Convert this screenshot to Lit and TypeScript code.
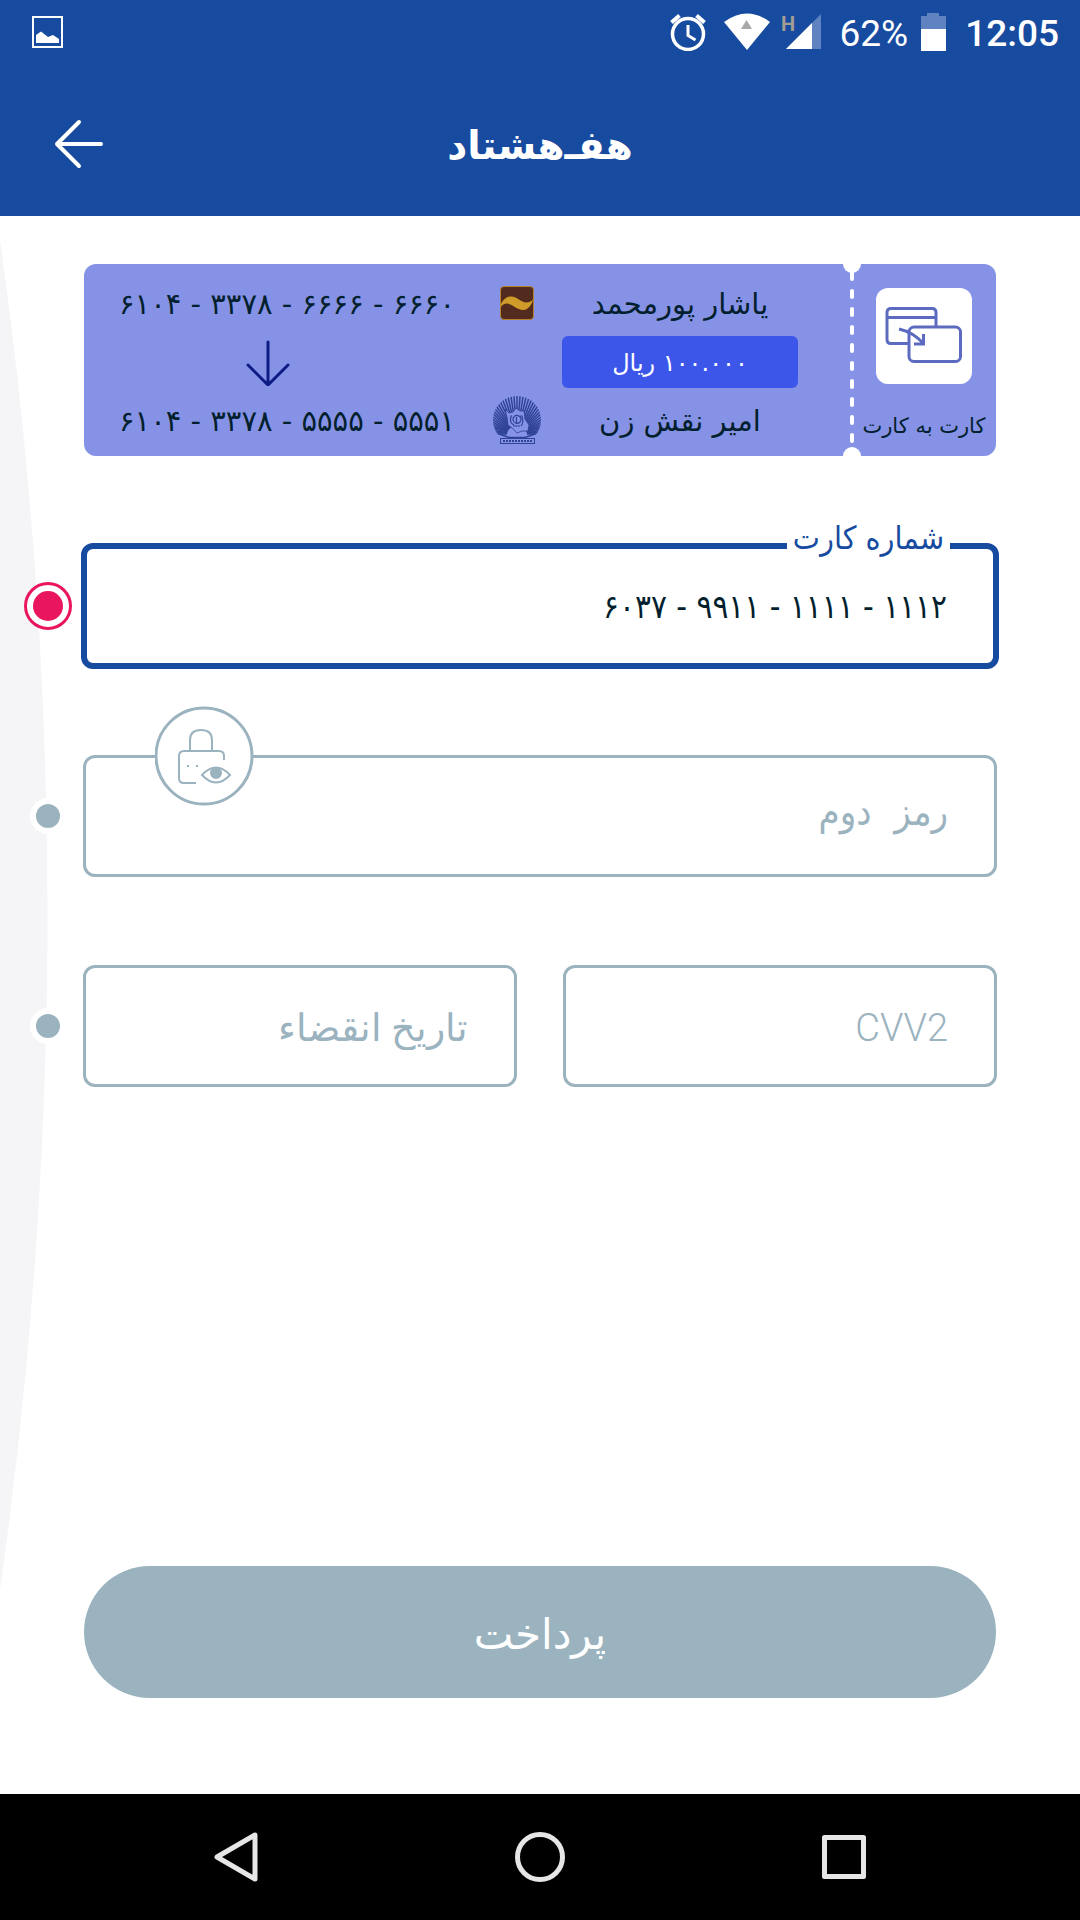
import { LitElement, html, svg, css } from "lit";
import { customElement, property } from "lit/decorators.js";

const rays = Array.from({ length: 41 }, (_, i) => {
  const angle = Math.PI + (i * Math.PI) / 40;
  return {
    x1: 24 + 10 * Math.cos(angle),
    y1: 38 + 8 * Math.sin(angle),
    x2: 24 + 50 * Math.cos(angle),
    y2: 38 + 50 * Math.sin(angle),
  };
});

@customElement("status-bar")
export class StatusBar extends LitElement {
  static styles = css`
    :host {
      display: flex;
      align-items: center;
      height: 64px;
      padding: 0 21px 0 32px;
      color: #fff;
      font-family: Roboto, sans-serif;
      font-size: 37px;
      line-height: 60px;
    }
    svg {
      display: block;
      flex: none;
    }
    .spacer {
      flex: 1;
    }
    .alarm {
      margin-right: 18px;
    }
    .wifi {
      margin-right: 11px;
    }
    .signal {
      margin-right: 18px;
    }
    .network {
      font-size: 20px;
      font-weight: 700;
      fill: #a39d94;
    }
    .percent {
      padding-top: 4px;
      margin-right: 13px;
    }
    .battery {
      margin-right: 19px;
    }
    .time {
      padding-top: 4px;
      font-weight: 500;
    }
  `;

  render() {
    return html`
      <svg width="32" height="32" viewBox="0 0 32 32" fill="none">
        <rect x="1" y="1" width="29" height="30" stroke="#fff" stroke-width="2" />
        <path d="M4 27V19L9 15.500L16 21L21 19L27 23V27Z" fill="#fff" />
      </svg>
      <span class="spacer"></span>
      <svg class="alarm" width="36" height="38" viewBox="0 0 36 38" fill="none" stroke="#fff">
        <circle cx="18" cy="21" r="15.500" stroke-width="3.500" />
        <path d="M18 12V22.500L25.500 27" stroke-width="3" />
        <path d="M1.500 9.500L9.500 2.500M34.500 9.500L26.500 2.500" stroke-width="4" />
      </svg>
      <svg class="wifi" width="46" height="38" viewBox="0 0 46 38">
        <path d="M0 9Q23 -8 46 9L23 37Z" fill="#fff" />
        <path d="M22.500 7L28 16H17Z" fill="#a8a8a8" />
      </svg>
      <svg class="signal" width="40" height="40" viewBox="0 0 40 40">
        <path d="M5 37L40 2V37Z" fill="#5f82c0" />
        <path d="M5 37L31 11V37Z" fill="#fff" />
        <text class="network" x="0" y="19">H</text>
      </svg>
      <span class="percent">62%</span>
      <svg class="battery" width="25" height="38" viewBox="0 0 25 38">
        <path d="M0 3H6V0H18V3H25V17H0Z" fill="#5f82c0" />
        <path d="M0 16H25V38H0Z" fill="#fff" />
      </svg>
      <span class="time">12:05</span>
    `;
  }
}

@customElement("transfer-ticket")
export class TransferTicket extends LitElement {
  static styles = css`
    :host {
      display: flex;
      height: 192px;
      position: relative;
      border-radius: 12px;
      background: #8692e6;
      color: #021f2e;
      overflow: hidden;
      font-family: "DejaVu Sans", sans-serif;
    }
    svg {
      display: block;
    }
    .details {
      flex: 1;
      display: grid;
      grid-template-columns: 1fr 54px 272px;
      grid-template-rows: 66px 52px 64px;
      align-items: center;
      justify-items: center;
      padding: 6px 27px 4px 0;
    }
    .number,
    .name {
      padding-top: 2px;
      font-size: 29px;
      line-height: 36px;
    }
    .number {
      direction: ltr;
    }
    .down {
      margin-right: 38px;
    }
    .amount {
      width: 236px;
      height: 52px;
      border-radius: 6px;
      background: #3c56ea;
      color: #fff;
      font-size: 24px;
      line-height: 54px;
      text-align: center;
    }
    .tear {
      width: 18px;
      height: 192px;
    }
    .kind {
      width: 126px;
      display: flex;
      flex-direction: column;
      align-items: center;
      padding: 24px 9px 0 0;
      gap: 24px;
    }
    .tile {
      border-radius: 12px;
      background: #fff;
    }
    .kind-name {
      font-size: 21px;
      line-height: 36px;
      white-space: nowrap;
    }
  `;

  render() {
    return html`
      <div class="details">
        <span class="number">۶۱۰۴ - ۳۳۷۸ - ۶۶۶۶ - ۶۶۶۰</span>
        <svg width="34" height="34" viewBox="0 0 34 34">
          <rect x="0.500" y="0.500" width="33" height="33" rx="3.500" fill="#522b1e" stroke="#b5832f" />
          <path d="M1 18C4 12 8 10 12 10.500C18 11.500 21 16 26 16.500C29.500 16.500 32 15 33 13C32 19 28 24 23 24C17 23.500 12 18 7 17.500C4 17.500 2 19 1 21Z" fill="#d09c29" />
        </svg>
        <span class="name" dir="rtl">یاشار پورمحمد</span>
        <svg class="down" width="44" height="48" viewBox="0 0 44 48" fill="none" stroke="#0d1c85" stroke-width="3" stroke-linecap="round" stroke-linejoin="round">
          <path d="M22 4V47M2 27L22 47L42 27" />
        </svg>
        <span></span>
        <div class="amount" dir="rtl">۱۰۰.۰۰۰ ریال</div>
        <span class="number">۶۱۰۴ - ۳۳۷۸ - ۵۵۵۵ - ۵۵۵۱</span>
        <svg width="48" height="48" viewBox="0 0 48 48" fill="none" stroke="#2f4396">
          <defs>
            <clipPath id="disc"><circle cx="24" cy="24" r="24" /></clipPath>
          </defs>
          <g clip-path="url(#disc)" stroke-width="1.500">
            ${rays.map((r) => svg`<line x1=${r.x1} y1=${r.y1} x2=${r.x2} y2=${r.y2} />`)}
            <path d="M6 38L16 41.500H32L42 38" />
          </g>
          <path d="M12 13L16 17L20 16L23 12L27 15L31 15L32 23L36 29L35 35L29 35L24 37L19 32L15 29L14 21Z" fill="#8692e6" stroke-width="0.800" />
          <path d="M19 20H18Q16 27 21 29M27 20H29Q31 27 28 30M20 24A4 4 0 1 1 27 26A4 4 0 0 1 20 24M23.500 21V28M20 30H27" stroke-width="1.200" />
          <rect x="7.500" y="42.500" width="34" height="5" fill="#8692e6" stroke-width="1" />
          <path d="M10 45H39" stroke-width="2" stroke-dasharray="2 1" />
        </svg>
        <span class="name" dir="rtl">امیر نقش زن</span>
      </div>
      <svg class="tear" viewBox="0 0 18 192">
        <path d="M9 9V186" fill="none" stroke="#fff" stroke-width="4" stroke-linecap="round" stroke-dasharray="6 12" />
        <circle cx="9" cy="0" r="9" fill="#fff" />
        <circle cx="9" cy="192" r="9" fill="#fff" />
      </svg>
      <div class="kind">
        <svg class="tile" width="96" height="96" viewBox="0 0 96 96" fill="none" stroke="#5c6bc0" stroke-width="3">
          <path d="M32 55.500H15Q11 55.500 11 51.500V24.500Q11 20.500 15 20.500H56Q60 20.500 60 24.500V38M11 29.500H60" />
          <rect x="33" y="39" width="51.500" height="34.500" rx="5" />
          <path d="M23 41Q37 44 48 56M47.500 46V56H38" />
        </svg>
        <span class="kind-name" dir="rtl">کارت به کارت</span>
      </div>
    `;
  }
}

@customElement("form-field")
export class FormField extends LitElement {
  @property() label = "";
  @property() value = "";
  @property() variant = "";

  static styles = css`
    :host {
      display: block;
      position: relative;
      flex: 1;
      min-width: 0;
      font-family: "DejaVu Sans Condensed", "DejaVu Sans", sans-serif;
    }
    .input {
      display: block;
      box-sizing: border-box;
      width: 100%;
      height: 122px;
      margin: 0;
      padding: 0 46px;
      border: 3px solid #9bb3bf;
      border-radius: 12px;
      background: #fff;
      outline: none;
      font-family: inherit;
      font-size: 38px;
      color: #021f2e;
      text-align: right;
    }
    .input::placeholder {
      color: #9bb3bf;
      opacity: 1;
    }
    .active {
      width: calc(100% + 4px);
      height: 126px;
      margin: -2px;
      border: 6px solid #174b9f;
      font-size: 33px;
    }
    .secret {
      padding-bottom: 4px;
      font-family: "Liberation Mono", "DejaVu Sans Condensed", "DejaVu Sans", monospace;
    }
    .light {
      padding-top: 4px;
      font-family: Roboto, "DejaVu Sans", sans-serif;
      font-weight: 300;
    }
    .label {
      position: absolute;
      top: -27px;
      right: 47px;
      padding: 0 6px;
      background: #fff;
      color: #174b9f;
      font-size: 32px;
      line-height: 40px;
    }
    .reveal {
      position: absolute;
      top: -49px;
      left: 72px;
      padding: 0;
      border: 0;
      background: none;
    }
    .reveal svg {
      display: block;
    }
  `;

  render() {
    const active = this.variant === "active";
    return html`
      ${active ? html`<label class="label" for="box" dir="rtl">${this.label}</label>` : ""}
      <input
        id="box"
        class="input ${this.variant}"
        type="text"
        dir=${active ? "ltr" : "rtl"}
        .value=${this.value}
        placeholder=${active ? "" : this.label}
        aria-label=${this.label}
      />
      ${this.variant === "secret"
        ? html`<button class="reveal" type="button" aria-label="رمز دوم">
            <svg width="100" height="100" viewBox="1 0 100 100" fill="none" stroke="#9bb3bf" stroke-width="2">
              <circle cx="50" cy="50" r="48" fill="#fff" stroke-width="3" />
              <path d="M36 45V34Q36 24 47 24Q58 24 58 34V45" />
              <path d="M42 77H30Q25 77 25 72V50Q25 45 30 45H65Q70 45 70 50V54" />
              <path d="M33 60H35M42 60H44" />
              <path d="M48 69Q62 54 76 69Q62 84 48 69Z" />
              <circle cx="62" cy="67" r="5" fill="#9bb3bf" />
            </svg>
          </button>`
        : ""}
    `;
  }
}

@customElement("app-root")
export class AppRoot extends LitElement {
  static styles = css`
    :host {
      display: flex;
      flex-direction: column;
      min-height: 100vh;
      background: #fff;
      font-family: "DejaVu Sans", sans-serif;
    }
    svg {
      display: block;
    }
    .top {
      background: #174b9f;
      height: 216px;
    }
    .bar {
      display: grid;
      grid-template-columns: 104px 1fr 104px;
      align-items: center;
      height: 160px;
    }
    .back {
      justify-self: end;
      padding: 0;
      border: 0;
      background: none;
    }
    .title {
      margin: 0;
      padding-top: 4px;
      color: #fff;
      font-size: 39px;
      font-weight: 700;
      line-height: 52px;
      text-align: center;
    }
    .content {
      position: relative;
      flex: 1;
      display: flex;
      flex-direction: column;
      padding: 48px 0 96px;
    }
    .curve {
      position: absolute;
      top: 0;
      left: 0;
    }
    .ticket {
      margin: 0 84px;
    }
    .steps {
      position: relative;
      display: flex;
      flex-direction: column;
      gap: 88px;
      margin-top: 89px;
    }
    .step {
      display: flex;
      align-items: center;
      padding-right: 83px;
    }
    .dot {
      flex: none;
      margin: 0 11px 0 24px;
    }
    .pair {
      flex: 1;
      display: flex;
      gap: 46px;
    }
    .pay {
      position: relative;
      margin: auto 84px 0;
      padding: 4px 0 0;
      height: 132px;
      border: 0;
      border-radius: 66px;
      background: #9bb3bf;
      color: #fff;
      font-family: inherit;
      font-size: 42px;
    }
    .nav {
      display: grid;
      grid-template-columns: 1fr 136px 1fr;
      height: 126px;
      background: #000;
    }
    .key {
      display: flex;
      align-items: center;
      justify-content: center;
      padding: 0;
      border: 0;
      background: none;
    }
  `;

  private dot(active = false) {
    return html`<svg class="dot" width="48" height="48" viewBox="0 0 48 48">
      ${active
        ? svg`<circle cx="24" cy="24" r="22.500" fill="#fff" stroke="#e9165f" stroke-width="3" /><circle cx="24" cy="24" r="15" fill="#e9165f" />`
        : svg`<circle cx="24" cy="24" r="18" fill="#fff" /><circle cx="24" cy="24" r="12" fill="#9bb3bf" />`}
    </svg>`;
  }

  render() {
    return html`
      <header class="top">
        <status-bar></status-bar>
        <div class="bar">
          <button class="back" type="button" aria-label="بازگشت">
            <svg width="50" height="50" viewBox="0 0 50 50" fill="none" stroke="#fff" stroke-width="4" stroke-linecap="round" stroke-linejoin="round">
              <path d="M25 3L3 25L25 47M3 25H47" />
            </svg>
          </button>
          <h1 class="title" dir="rtl">هفـ&zwnj;هشتاد</h1>
        </div>
      </header>
      <main class="content">
        <svg class="curve" width="48" height="1400" viewBox="0 0 48 1400">
          <path d="M0 24A4840 4840 0 0 1 0 1374Z" fill="#f5f5f7" />
        </svg>
        <transfer-ticket class="ticket"></transfer-ticket>
        <div class="steps">
          <div class="step">
            ${this.dot(true)}
            <form-field variant="active" label="شماره کارت" value="۶۰۳۷ - ۹۹۱۱ - ۱۱۱۱ - ۱۱۱۲"></form-field>
          </div>
          <div class="step">
            ${this.dot()}
            <form-field variant="secret" label="رمز دوم"></form-field>
          </div>
          <div class="step">
            ${this.dot()}
            <div class="pair">
              <form-field variant="light" label="تاریخ انقضاء"></form-field>
              <form-field variant="light" label="CVV2"></form-field>
            </div>
          </div>
        </div>
        <button class="pay" type="button" dir="rtl">پرداخت</button>
      </main>
      <nav class="nav">
        <button class="key" type="button" aria-label="Back">
          <svg width="48" height="54" viewBox="0 0 48 54" fill="none" stroke="#e6e6e6" stroke-width="5" stroke-linejoin="round">
            <path d="M43 5V49L5 27Z" />
          </svg>
        </button>
        <button class="key" type="button" aria-label="Home">
          <svg width="50" height="50" viewBox="0 0 50 50" fill="none" stroke="#e6e6e6" stroke-width="5">
            <circle cx="25" cy="25" r="22.500" />
          </svg>
        </button>
        <button class="key" type="button" aria-label="Recents">
          <svg width="44" height="44" viewBox="0 0 44 44" fill="none" stroke="#e6e6e6" stroke-width="5" stroke-linejoin="round">
            <rect x="2.500" y="2.500" width="39" height="39" />
          </svg>
        </button>
      </nav>
    `;
  }
}
